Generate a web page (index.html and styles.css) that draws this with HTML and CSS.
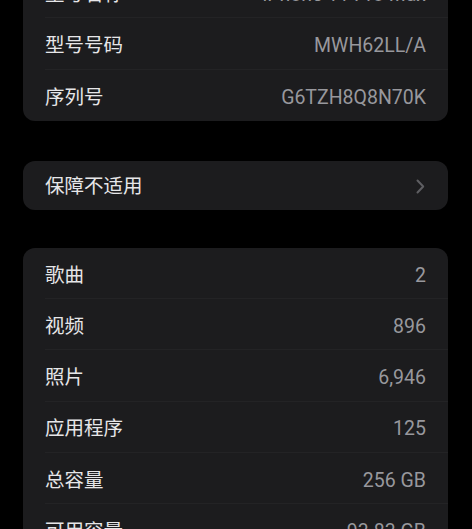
FILE: index.html
```html
<!DOCTYPE html>
<html>
<head>
	<title>关于本机</title>
	<meta charset="utf-8">
	<meta name="viewport" content="width=device-width, initial-scale=1">
	<link rel="stylesheet" href="styles.css">
</head>
<body>

	<div class="page">
		<section class="group">
			<div class="row">
				<div class="row-inner">
					<span class="label">型号名称</span>
					<span class="value">iPhone 11 Pro Max</span>
				</div>
			</div>
			<div class="row">
				<div class="row-inner">
					<span class="label">型号号码</span>
					<span class="value">MWH62LL/A</span>
				</div>
			</div>
			<div class="row">
				<div class="row-inner">
					<span class="label">序列号</span>
					<span class="value">G6TZH8Q8N70K</span>
				</div>
			</div>
		</section>

		<section class="group">
			<div class="row">
				<div class="row-inner row-link">
					<span class="label">保障不适用</span>
					<svg class="chevron" width="9" height="15" viewBox="0 0 9 15">
						<path d="M1.5 1.5 L7.2 7.5 L1.5 13.5" fill="none" stroke="#5e5e62" stroke-width="2" stroke-linecap="round" stroke-linejoin="round"/>
					</svg>
				</div>
			</div>
		</section>

		<section class="group group-stats">
			<div class="row">
				<div class="row-inner">
					<span class="label">歌曲</span>
					<span class="value">2</span>
				</div>
			</div>
			<div class="row">
				<div class="row-inner">
					<span class="label">视频</span>
					<span class="value">896</span>
				</div>
			</div>
			<div class="row">
				<div class="row-inner">
					<span class="label">照片</span>
					<span class="value">6,946</span>
				</div>
			</div>
			<div class="row">
				<div class="row-inner">
					<span class="label">应用程序</span>
					<span class="value">125</span>
				</div>
			</div>
			<div class="row">
				<div class="row-inner">
					<span class="label">总容量</span>
					<span class="value">256 GB</span>
				</div>
			</div>
			<div class="row">
				<div class="row-inner">
					<span class="label">可用容量</span>
					<span class="value">93.83 GB</span>
				</div>
			</div>
		</section>
	</div>

</body>
</html>
```

FILE: styles.css
```css
* {
	box-sizing: border-box;
}
body {
	background-color: #000;
	margin: 0;
	padding: 0;
	overflow: hidden;
	font-family: Roboto, "Noto Sans CJK SC", sans-serif;
	font-size: 19.5px;
	line-height: 1.2;
}

.page {
	margin-top: -33px;
	padding: 0 24px 0 23px;
	display: flex;
	flex-direction: column;
}

.group {
	background-color: #1c1c1e;
	border-radius: 12px;
	overflow: hidden;
}
.group + .group {
	margin-top: 40px;
}
.group-stats {
	margin-top: 38px !important;
}

.row {
	padding-left: 22px;
}
.row-inner {
	height: 51.25px;
	padding-top: 5px;
	padding-right: 22px;
	display: flex;
	align-items: center;
	justify-content: space-between;
	border-bottom: 1px solid #232325;
}
.row:last-child .row-inner {
	border-bottom: none;
}
.row-link {
	height: 49px;
	padding-top: 2px;
	padding-right: 23px;
}

.label {
	color: #e6e6e8;
}
.value {
	color: #98989d;
}
.chevron {
	display: block;
}
```
